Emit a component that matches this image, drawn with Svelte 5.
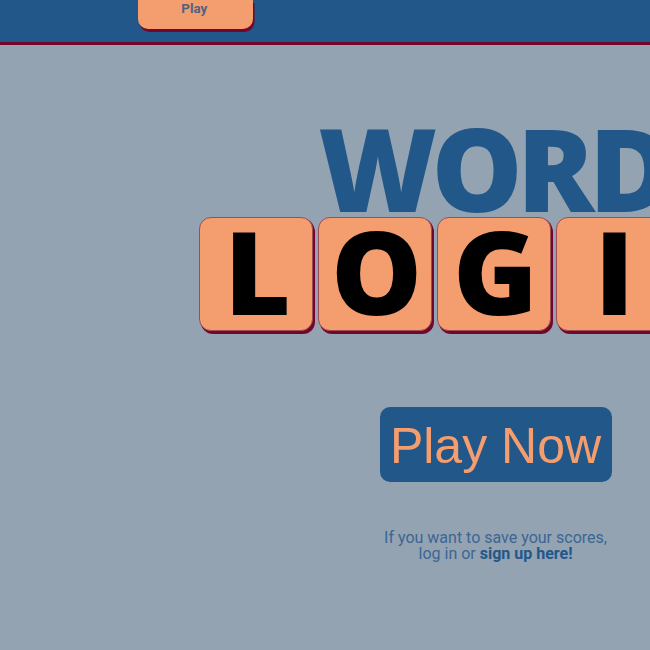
<script>
  const letters = ['L', 'O', 'G', 'I', 'C'];
</script>

<div class="viewport">
  <div class="page">
    <header>
      <a class="tab" href="#play">Play</a>
    </header>
    <main>
      <h1>
        <span class="word">WORD</span>
        <span class="tiles">
          {#each letters as letter}
            <span class="tile">{letter}</span>
          {/each}
        </span>
      </h1>
      <button>Play Now</button>
      <p>If you want to save your scores,<br />log in or <b>sign up here!</b></p>
    </main>
  </div>
</div>

<style>
  :global(body) {
    margin: 0;
    background: #94a3b2;
  }
  .viewport {
    width: 100%;
    height: 650px;
    overflow: hidden;
    background: #94a3b2;
  }
  .page {
    width: 991px;
    font-family: Roboto, sans-serif;
    color: #225789;
  }
  header {
    box-sizing: border-box;
    height: 45px;
    padding-left: 137.5px;
    background: #225789;
    border-bottom: 3px solid #71082b;
  }
  .tab {
    display: flex;
    justify-content: center;
    box-sizing: border-box;
    width: 115.5px;
    height: 28.5px;
    padding: 1px 2px 0 0;
    border-radius: 0 0 10px 10px;
    background: #f49d6e;
    box-shadow: 1.5px 3px 0 #71082b;
    font-size: 13.4px;
    line-height: 16px;
    font-weight: 700;
    color: #4f6380;
    text-decoration: none;
  }
  main {
    display: flex;
    flex-direction: column;
    align-items: center;
    padding-top: 69px;
  }
  h1 {
    display: flex;
    flex-direction: column;
    align-items: center;
    margin: 0;
    font: 800 114.5px/108px "Open Sans", sans-serif;
  }
  .word {
    height: 103px;
    letter-spacing: -5.7px;
    margin-left: -5.5px;
  }
  .tiles {
    display: flex;
    gap: 5px;
    margin-left: -4px;
  }
  .tile {
    box-sizing: border-box;
    width: 114px;
    height: 114px;
    padding-left: 4px;
    border: 1px solid #a04c55;
    border-radius: 12px;
    background: #f49d6e;
    box-shadow: 1px 1px 0 #71082b, 2px 3px 0 #71082b;
    color: #000;
    text-align: center;
    line-height: 107px;
  }
  button {
    width: 232px;
    height: 75px;
    margin: 76px 0 0;
    padding: 4px 0 0;
    border: 0;
    border-radius: 10px;
    background: #225789;
    color: #f49d6e;
    font: 50px/71px "Liberation Sans", Arial, sans-serif;
  }
  p {
    margin: 48px 0 0;
    font-size: 16px;
    line-height: 16px;
    text-align: center;
    color: #3b6692;
  }
  b {
    color: #225789;
  }
</style>
